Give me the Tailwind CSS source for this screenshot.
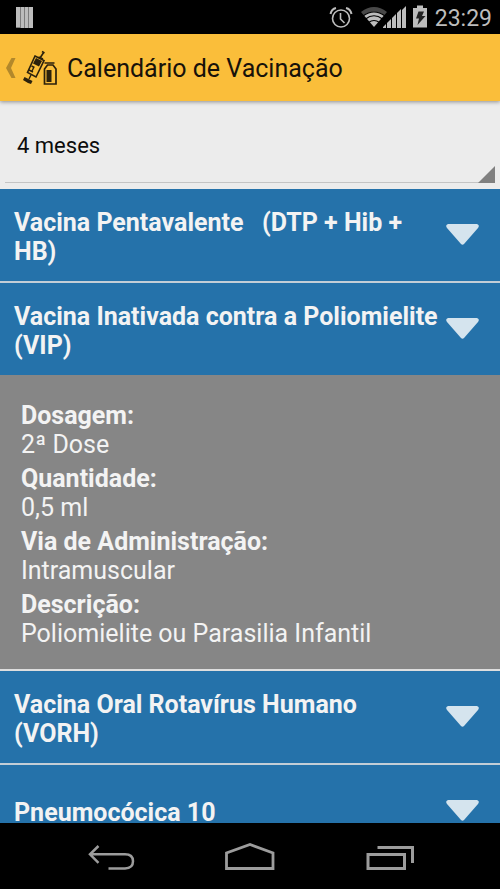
<!DOCTYPE html>
<html lang="pt-BR">
<head>
<meta charset="utf-8">
<meta name="viewport" content="width=device-width, initial-scale=1">
<title>Calendário de Vacinação</title>
<script src="https://cdn.jsdelivr.net/npm/@tailwindcss/browser@4"></script>
</head>
<body class="flex h-screen flex-col overflow-hidden bg-[#ececec] font-['Roboto',sans-serif]">
  <div class="flex h-[34px] shrink-0 items-center justify-between bg-black pr-2 pl-4 text-[#bdbdbd]">
    <svg class="h-[21px] w-[18px]" viewBox="0 0 18 21" fill="#bdbdbd" aria-hidden="true"><path d="M0 0h17v21H0z" fill="#7d7d7d"/><path d="M0 0h4v20H0zM5 0h3v21H5zM9 0h3v21H9zM13 0h4v21h-4z"/></svg>
    <div class="flex items-center">
      <svg class="h-[34px] w-[110px]" viewBox="0 0 110 34" aria-hidden="true">
        <g fill="none" stroke="#bdbdbd"><circle cx="16" cy="18.500" r="8.500" stroke-width="1.600"/><path d="M15.500 13v6l4 4" stroke-width="1.600"/><path d="M5.500 14q1-5 5.500-6M26.500 14q-1-5-5.500-6" stroke-width="2"/></g>
        <path d="M36 12q13-10 26 0l-3 3.500q-10-7-20 0z" fill="#484848"/>
        <path d="M49 27L39 15.500q10-7.500 20 0z" fill="#bdbdbd"/>
        <g fill="none" stroke="#000" stroke-width="1.200"><path d="M38 16q11-8 22 0M40.500 19q8.500-6.500 17 0M43.500 22.500q5.500-4 11 0"/></g>
        <path d="M58 28v-1l3-3v4zM62 28v-5l4-4v9zM67 28V18l4-4v14zM72 28V13l4-4v19zM77 28V10l4-4v22z" fill="#bdbdbd"/>
        <path d="M88 8h4V5.500h6V8h4v19.500H88z" fill="#bdbdbd"/><path d="M93.500 11.500h5.500l-2 4.500h3.500l-8 9 1.500-6.500h-3z" fill="#222"/>
      </svg>
      <span class="pt-[3px] text-[23px] leading-[31px]">23:29</span>
    </div>
  </div>

  <header class="relative z-10 flex h-[67px] shrink-0 items-center bg-[#fabe3a] shadow-[0_1px_4px_rgba(0,0,0,0.4)]">
    <button type="button" aria-label="Voltar" class="flex items-center pl-1">
      <svg class="h-9 w-[56px]" viewBox="4 50 56 36" aria-hidden="true">
        <path d="M11.500 58H15.500L11 68l4.500 10h-4L6 68z" fill="#b2882b"/>
        <g fill="none" stroke="#2b210c">
          <path d="M35 56l9 4.500L36 77l-8.500-4.500z" stroke-width="1.600"/>
          <path d="M40 58l4-6M42 51.500l2.500 1.500M38.500 57l4.500 2" stroke-width="1.600"/>
          <path d="M31 75l-2 4M29 70l4 2M31.500 66l3 1.500M32 71l2-4" stroke-width="1.400"/>
          <path d="M44.500 84V69l3-4h5.500l3 4v15zM44.500 63h10" stroke-width="1.700"/>
        </g>
        <path d="M36 58l6 3-3 5.500-6-3zM24.500 77l8 4-1.500 3-3-1-5-3z" fill="#2b210c"/><path d="M46.500 70h5v12h-5z" fill="#2b210c"/>
      </svg>
    </button>
    <h1 class="ml-[7px] pt-[3px] text-[25px] text-[#17120a]">Calendário de Vacinação</h1>
  </header>

  <div class="relative h-[88px] shrink-0 px-[5px]">
    <select aria-label="Idade" class="h-[82px] w-full appearance-none border-b border-[#c4c4c4] bg-transparent pt-[7px] pl-3 text-[22px] text-[#0c0c0c] outline-none">
      <option>4 meses</option>
    </select>
    <svg class="pointer-events-none absolute right-[5px] bottom-[6px] h-[17px] w-[17px]" viewBox="0 0 17 17" aria-hidden="true"><path d="M17 0v17H0z" fill="#808080"/></svg>
  </div>

  <main class="min-h-0 flex-1 overflow-hidden text-[25px] leading-[29px] text-[#f3f3f3]">
    <h2 class="border-b-2 border-[#c3ced7] font-bold">
      <button type="button" aria-expanded="false" class="flex h-[92px] w-full items-center bg-[#2572aa] pr-5 pl-[14px] text-left">
        <span class="flex-1 pt-[3px]">Vacina Pentavalente &nbsp; (DTP + Hib + HB)</span>
        <svg class="h-[22px] w-[35px] shrink-0" viewBox="0 1 35 22" aria-hidden="true"><path d="M3 1h29q3 1 1 4L19 21q-1.500 1.500-3 0L2 5Q0 2 3 1z" fill="#d5e4ee"/></svg>
      </button>
    </h2>
    <h2 class="font-bold">
      <button type="button" aria-expanded="true" class="flex h-[92px] w-full items-center bg-[#2572aa] pr-5 pl-[14px] text-left">
        <span class="flex-1 pt-[3px]">Vacina Inativada contra a Poliomielite (VIP)</span>
        <svg class="h-[22px] w-[35px] shrink-0" viewBox="0 1 35 22" aria-hidden="true"><path d="M3 1h29q3 1 1 4L19 21q-1.500 1.500-3 0L2 5Q0 2 3 1z" fill="#d5e4ee"/></svg>
      </button>
    </h2>
    <dl class="flex flex-col gap-[5px] border-b-2 border-[#dedede] bg-[#868686] px-[21px] pt-[26px] pb-[21px]">
      <div><dt class="font-bold">Dosagem:</dt><dd>2ª Dose</dd></div>
      <div><dt class="font-bold">Quantidade:</dt><dd>0,5 ml</dd></div>
      <div><dt class="font-bold">Via de Administração:</dt><dd>Intramuscular</dd></div>
      <div><dt class="font-bold">Descrição:</dt><dd>Poliomielite ou Parasilia Infantil</dd></div>
    </dl>
    <h2 class="border-b-2 border-[#c3ced7] font-bold">
      <button type="button" aria-expanded="false" class="flex h-[92px] w-full items-center bg-[#2572aa] pr-5 pl-[14px] text-left">
        <span class="flex-1 pt-[3px]">Vacina Oral Rotavírus Humano (VORH)</span>
        <svg class="h-[22px] w-[35px] shrink-0" viewBox="0 1 35 22" aria-hidden="true"><path d="M3 1h29q3 1 1 4L19 21q-1.500 1.500-3 0L2 5Q0 2 3 1z" fill="#d5e4ee"/></svg>
      </button>
    </h2>
    <h2 class="font-bold">
      <button type="button" aria-expanded="false" class="flex h-[92px] w-full items-center bg-[#2572aa] pr-5 pl-[14px] text-left">
        <span class="flex-1 pt-[3px]">Pneumocócica 10</span>
        <svg class="h-[22px] w-[35px] shrink-0" viewBox="0 1 35 22" aria-hidden="true"><path d="M3 1h29q3 1 1 4L19 21q-1.500 1.500-3 0L2 5Q0 2 3 1z" fill="#d5e4ee"/></svg>
      </button>
    </h2>
  </main>

  <nav class="flex h-[66px] shrink-0 items-center justify-center bg-black pt-[2px]" aria-label="Sistema">
    <button type="button" aria-label="Voltar" class="flex w-[139px] justify-center"><svg class="h-8 w-[52px]" viewBox="0 0 52 32" fill="none" stroke="#9c9c9c" stroke-width="2.500" aria-hidden="true"><path d="M13.500 5L5 13.300l8.500 8.500M5 13.300h35q8 0 8 7t-8 7.200H23.500"/></svg></button>
    <button type="button" aria-label="Início" class="flex w-[139px] justify-center"><svg class="h-8 w-[52px]" viewBox="0 0 52 32" fill="none" stroke="#9c9c9c" stroke-width="2.800" aria-hidden="true"><path d="M2.500 27.500V12L26 3.500l23 8.500v15.500z"/></svg></button>
    <button type="button" aria-label="Recentes" class="flex w-[139px] justify-center"><svg class="h-8 w-[52px]" viewBox="0 0 52 32" fill="none" stroke="#9c9c9c" stroke-width="3" aria-hidden="true"><path d="M5 13.500h36.500v14H5zM14.500 6.500h35V22"/></svg></button>
  </nav>
</body>
</html>
